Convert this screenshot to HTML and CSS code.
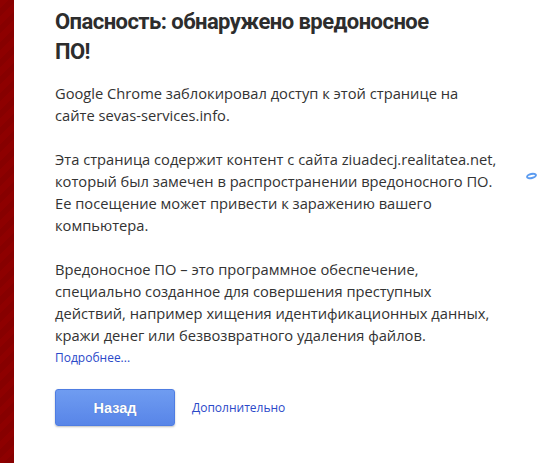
FILE: index.html
```html
<!DOCTYPE html>
<html lang="ru">
<head>
<meta charset="utf-8">
<link rel="stylesheet" href="styles.css">
</head>
<body>
<div class="page">
  <div class="strip"></div>
  <main class="content">
    <h1 class="title">Опасность: обнаружено вредоносное ПО!</h1>
    <p class="text">Google Chrome заблокировал доступ к этой странице на сайте sevas-services.info.</p>
    <p class="text">Эта страница содержит контент с сайта ziuadecj.realitatea.net, который был замечен в распространении вредоносного ПО. Ее посещение может привести к заражению вашего компьютера.</p>
    <p class="text last">Вредоносное ПО – это программное обеспечение, специально созданное для совершения преступных действий, например хищения идентификационных данных, кражи денег или безвозвратного удаления файлов.</p>
    <a class="more" href="#">Подробнее...</a>
    <div class="actions">
      <button class="back">Назад</button>
      <a class="details" href="#">Дополнительно</a>
    </div>
  </main>
  <span class="blip"></span>
</div>
</body>
</html>
```
FILE: styles.css
```css
html, body {
  margin: 0;
  padding: 0;
  background: #fff;
}
.page {
  display: flex;
  min-height: 463px;
  position: relative;
}
.strip {
  width: 14px;
  flex: none;
  background: repeating-linear-gradient(135deg, #8e0000 0 6px, #870000 6px 12px);
}
.content {
  padding: 7px 0 0 41px;
  width: 444px;
  font-family: "Open Sans", "Noto Sans", sans-serif;
  color: #333;
}
.title {
  margin: 0;
  font-family: Roboto, "Open Sans", sans-serif;
  font-size: 22px;
  letter-spacing: -0.55px;
  line-height: 30px;
  font-weight: 700;
  width: 380px;
  color: #2d2d2d;
}
.text {
  margin: 15px 0 0;
  font-size: 14.7px;
  line-height: 22px;
}
.text + .text {
  margin-top: 22px;
}
.more {
  display: block;
  font-size: 12px;
  line-height: 18px;
  margin-top: 3px;
  color: #2a49c9;
  text-decoration: none;
}
.actions {
  display: flex;
  align-items: center;
  gap: 17px;
  margin-top: 22px;
}
.back {
  width: 120px;
  height: 37px;
  border: 1px solid #4f7de2;
  border-radius: 3px;
  background: linear-gradient(#6f9cf1, #5885e8);
  box-shadow: 0 1px 2px rgba(0,0,0,0.25);
  color: #fff;
  font-family: "Liberation Sans", Arial, sans-serif;
  font-weight: 700;
  font-size: 14.5px;
  text-shadow: 0 0 1px rgba(0,0,0,0.25);
  padding: 0;
}
.details {
  font-size: 12px;
  color: #2a49c9;
  text-decoration: none;
}
.blip {
  position: absolute;
  left: 526px;
  top: 173px;
  width: 7px;
  height: 2px;
  border: 2px solid #5b9bf0;
  border-radius: 50%;
  transform: rotate(-12deg);
}
```
